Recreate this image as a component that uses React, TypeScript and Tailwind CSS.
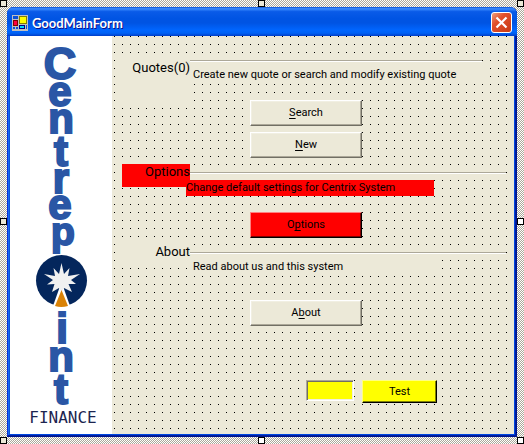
import type { ButtonHTMLAttributes, ReactNode } from "react";

const handles = [
  "left-0 top-0 bg-[#ece9d8]",
  "left-1/2 -ml-1 top-0 bg-[#ece9d8]",
  "right-0 top-0 bg-[#ece9d8]",
  "left-0 top-1/2 -mt-1 bg-[#ece9d8]",
  "right-0 top-1/2 -mt-1 bg-white",
  "left-0 bottom-0 bg-[#ece9d8]",
  "left-1/2 -ml-1 bottom-0 bg-white",
  "right-0 bottom-0 bg-white",
];

const tones = {
  face: "bg-[#ece9d8] border-t-white border-l-white border-r-[#716f64] border-b-[#716f64] shadow-[inset_-1px_-1px_#aca899,inset_1px_1px_#f1efe2]",
  red: "bg-[#ff0000] border-t-[#ff8080] border-l-[#ff8080] border-r-black border-b-black shadow-[inset_-1px_-1px_#800000]",
  yellow: "bg-[#ffff00] border-t-[#ffff80] border-l-[#ffff80] border-r-black border-b-black shadow-[inset_-1px_-1px_#808000]",
};

function PushButton({
  tone = "face",
  size = "w-28 h-[26px]",
  children,
  ...rest
}: { tone?: keyof typeof tones; size?: string; children: ReactNode } & ButtonHTMLAttributes<HTMLButtonElement>) {
  return (
    <button type="button" className={`flex items-center justify-center border ${size} ${tones[tone]}`} {...rest}>
      <span>{children}</span>
    </button>
  );
}

function Key({ children }: { children: ReactNode }) {
  return <span className="underline decoration-1 underline-offset-2 [text-decoration-skip-ink:none]">{children}</span>;
}

function Rule({ className }: { className: string }) {
  return <div className={`h-[2px] border-t border-t-[#aca899] bg-white ${className}`} />;
}

function Section({ title, titleClass, children }: { title: string; titleClass: string; children: ReactNode }) {
  return (
    <section className="grid grid-cols-[74px_1fr]">
      <h2 className={`justify-self-end self-start text-right text-[13px] leading-4 ${titleClass}`}>{title}</h2>
      <div>{children}</div>
    </section>
  );
}

function Logo() {
  return (
    <svg width="102" height="398" viewBox="0 0 102 398" role="img" aria-label="Centrepoint Finance">
      <g
        fill="#2a56a5"
        stroke="#2a56a5"
        strokeWidth="2"
        fontFamily="'Liberation Sans', Arial, sans-serif"
        fontWeight="700"
        fontSize="42"
        textAnchor="middle"
      >
        <text x="50" y="43" fontSize="45">C</text>
        <text x="50" y="70">e</text>
        <text x="51" y="97">n</text>
        <text x="51" y="130">t</text>
        <text x="51" y="157">r</text>
        <text x="50" y="183">e</text>
        <text x="53" y="209" fontSize="39">p</text>
        <text x="52" y="307">i</text>
        <text x="51" y="335">n</text>
        <text x="51" y="368">t</text>
      </g>
      <circle cx="51.500" cy="244.500" r="25.500" fill="#04265c" />
      <path d="M51.500 246 L43 270 L60 270 Z" fill="#fff" />
      <path
        d="M51.500 227 L54 238 L59.500 232 L58 240 L70 238 L61 244 L66 248 L58.500 248 L62 256 L54 252 L51.500 256 L49 252 L42 256 L44.500 248 L37 248.500 L43 244 L34 238 L45 240 L43.500 232 L49 238 Z"
        fill="#f0f0f0"
      />
      <path d="M51.500 254 L45 270 Q51 272 58 270 Z" fill="#d98207" />
      <text x="53" y="387" fontSize="16" fontFamily="'DejaVu Sans Mono', monospace" textAnchor="middle" fill="#1c2550">
        FINANCE
      </text>
    </svg>
  );
}

function AppIcon() {
  return (
    <svg width="16" height="16" viewBox="0 0 16 16" shapeRendering="crispEdges" aria-hidden="true">
      <rect width="16" height="16" fill="#c0c0c0" />
      <rect x="1" y="1" width="5" height="3" fill="#0a50d8" />
      <rect x="1" y="5" width="5" height="6" fill="#800000" />
      <rect x="2" y="6" width="3" height="4" fill="#ff0040" />
      <rect x="7" y="1" width="8" height="8" fill="#808000" />
      <rect x="8" y="2" width="6" height="6" fill="#ffff00" />
      <rect x="7" y="10" width="6" height="4" fill="#000080" />
      <rect x="8" y="11" width="4" height="2" fill="#00d8ff" />
      <rect x="1" y="12" width="2" height="2" fill="#0a50d8" />
      <rect x="4" y="12" width="2" height="2" fill="#0a50d8" />
      <rect x="14" y="10" width="1" height="4" fill="#0a50d8" />
    </svg>
  );
}

export default function App() {
  return (
    <div className="relative bg-[conic-gradient(#aca899_25%,#fff_0_50%,#aca899_0_75%,#fff_0)] bg-[length:2px_2px] p-[7px] font-['Roboto',sans-serif] text-[11px] leading-4 text-black">
      {handles.map((place) => (
        <span key={place} className={`absolute size-[7px] border border-black ${place}`} />
      ))}
      <main className="overflow-hidden rounded-t-[7px] bg-[#0855dd] px-[3px] pb-[3px] shadow-[inset_-1px_-1px_#00138c,inset_1px_0_#0831d9,inset_-2px_-2px_#001ea0,inset_2px_0_#166aee,inset_-3px_-3px_#0046e0]">
        <header className="-mx-[3px] flex h-[29px] items-center gap-1 bg-[linear-gradient(#0a50d0_0%,#3b8cff_6%,#0a5be8_16%,#0054e3_40%,#0054e3_55%,#0066ff_80%,#0062f5_90%,#003dc8_100%)] pl-[5px] pr-[5px] pt-[2px]">
          <AppIcon />
          <h1 className="flex-1 font-['Lato',sans-serif] text-[13px] font-bold text-white [text-shadow:1px_1px_#0f1089]">
            GoodMainForm
          </h1>
          <button
            type="button"
            aria-label="Close"
            className="flex size-[21px] items-center justify-center rounded-[3px] border border-white bg-[linear-gradient(135deg,#f0a080,#e2512c_35%,#c83a14)]"
          >
            <svg width="13" height="13" viewBox="0 0 13 13" aria-hidden="true">
              <path d="M1.500 1.500 L11.500 11.500 M11.500 1.500 L1.500 11.500" stroke="#fff" strokeWidth="2.200" />
            </svg>
          </button>
        </header>
        <div className="flex bg-[linear-gradient(to_right,transparent_1px,#ece9d8_1px),linear-gradient(to_bottom,#000_1px,#ece9d8_1px)] bg-[length:8px_8px]">
          <div className="w-[102px] shrink-0 bg-white">
            <Logo />
          </div>
          <form className="flex flex-1 flex-col gap-[6px] pb-[31px] pl-1 pt-6">
            <Section title="Quotes(0)" titleClass="w-[74px] h-12 bg-[#ece9d8]">
              <Rule className="mr-8" />
              <p className="mr-7 mt-1 bg-[#ece9d8] pl-[3px] leading-[18px]">
                Create new quote or search and modify existing quote
              </p>
              <div className="ml-[60px] mt-4 flex flex-col gap-[6px]">
                <PushButton>
                  <Key>S</Key>earch
                </PushButton>
                <PushButton>
                  <Key>N</Key>ew
                </PushButton>
              </div>
            </Section>
            <Section title="Options" titleClass="w-[68px] h-[23px] bg-[#ff0000]">
              <Rule className="mr-2 mt-2" />
              <p className="-ml-1 mt-[6px] w-[248px] bg-[#ff0000]">Change default settings for Centrix System</p>
              <div className="ml-[60px] mt-4">
                <PushButton tone="red">
                  O<Key>p</Key>tions
                </PushButton>
              </div>
            </Section>
            <Section title="About" titleClass="w-[68px] h-[23px] bg-[#ece9d8]">
              <Rule className="mr-2 mt-2" />
              <p className="mt-1 w-[250px] bg-[#ece9d8] pl-[3px] leading-[18px]">Read about us and this system</p>
              <div className="ml-[60px] mt-6">
                <PushButton>
                  A<Key>b</Key>out
                </PushButton>
              </div>
            </Section>
            <div className="ml-[190px] mt-12 flex items-start gap-2">
              <input
                type="text"
                aria-label="Test value"
                className="h-[21px] w-12 border border-b-white border-l-[#aca899] border-r-white border-t-[#aca899] bg-[#ffff00] px-1 shadow-[inset_1px_1px_#716f64,inset_-1px_-1px_#f1efe2]"
              />
              <PushButton tone="yellow" size="w-[75px] h-[23px]">
                Test
              </PushButton>
            </div>
          </form>
        </div>
      </main>
    </div>
  );
}
